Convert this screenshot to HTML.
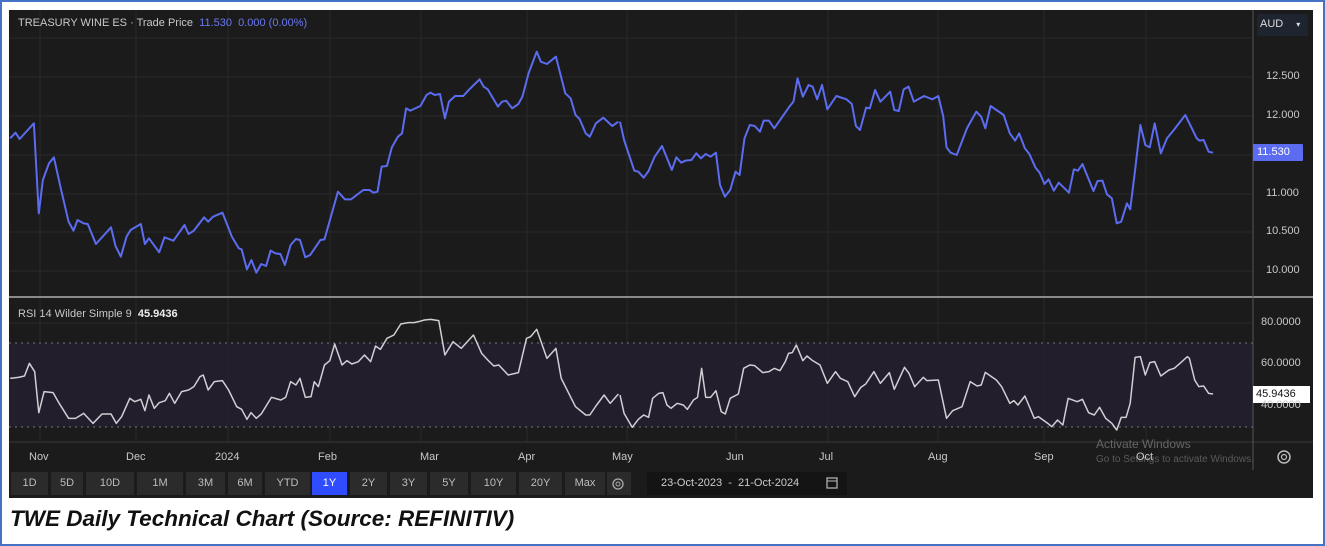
<!DOCTYPE html>
<html><head><meta charset="utf-8"><style>
*{margin:0;padding:0;box-sizing:border-box}
body{width:1325px;height:546px;background:#fff;position:relative;overflow:hidden;font-family:"Liberation Sans",sans-serif}
.frame{position:absolute;left:0;top:0;width:1325px;height:546px;border:2px solid #4472c4}
.chart{position:absolute;left:9px;top:10px;width:1304px;height:488px;background:#1b1b1b;overflow:hidden}
.t{position:absolute;font-size:11px;color:#c8c8c8;white-space:nowrap}
.btn{position:absolute;top:472px;height:23px;background:#2b2b2b;color:#bdbdbd;font-size:11px;line-height:23px;text-align:center}
.cap{position:absolute;left:10px;top:506px;font-size:22.5px;font-weight:bold;font-style:italic;color:#111;white-space:nowrap}
</style></head><body>
<div class="frame"></div>
<div class="chart"></div>
<svg style="position:absolute;left:0;top:0" width="1325" height="546">
<g stroke="#2a2a2a" stroke-width="1">
<line x1="9" y1="38" x2="1253" y2="38"/><line x1="9" y1="77" x2="1253" y2="77"/><line x1="9" y1="116" x2="1253" y2="116"/><line x1="9" y1="155" x2="1253" y2="155"/><line x1="9" y1="194" x2="1253" y2="194"/><line x1="9" y1="232" x2="1253" y2="232"/><line x1="9" y1="271" x2="1253" y2="271"/>
<line x1="9" y1="323" x2="1253" y2="323"/><line x1="9" y1="364" x2="1253" y2="364"/><line x1="9" y1="406" x2="1253" y2="406"/>
<line x1="40" y1="10" x2="40" y2="442"/><line x1="136" y1="10" x2="136" y2="442"/><line x1="228" y1="10" x2="228" y2="442"/><line x1="330" y1="10" x2="330" y2="442"/><line x1="421" y1="10" x2="421" y2="442"/><line x1="527" y1="10" x2="527" y2="442"/><line x1="627" y1="10" x2="627" y2="442"/><line x1="736" y1="10" x2="736" y2="442"/><line x1="828" y1="10" x2="828" y2="442"/><line x1="938" y1="10" x2="938" y2="442"/><line x1="1044" y1="10" x2="1044" y2="442"/><line x1="1146" y1="10" x2="1146" y2="442"/>
</g>
<rect x="9" y="343" width="1244" height="84" fill="#251f2e" opacity="0.9"/>
<line x1="9" y1="343" x2="1253" y2="343" stroke="#777" stroke-dasharray="2,4"/>
<line x1="9" y1="427" x2="1253" y2="427" stroke="#777" stroke-dasharray="2,4"/>
<line x1="9" y1="297" x2="1313" y2="297" stroke="#8a8a8a" stroke-width="2"/>
<line x1="9" y1="442" x2="1313" y2="442" stroke="#3a3a3a" stroke-width="1"/>
<line x1="1253" y1="10" x2="1253" y2="470" stroke="#555" stroke-width="1"/>
<g transform="translate(0,40) scale(0.40816,0.33333)" fill="none" stroke-linejoin="round">
<polyline vector-effect="non-scaling-stroke" stroke="#5b6cf0" stroke-width="2" points="25,295 38,278 48,297 83,250 95,520 105,420 120,370 132,352 148,440 168,545 180,572 190,540 205,550 215,552 235,612 272,562 283,618 296,650 310,590 320,570 345,552 355,612 365,595 390,637 403,592 425,602 452,555 462,582 475,572 500,532 510,545 522,530 545,518 568,590 585,625 592,628 605,688 616,660 628,698 640,672 652,678 663,632 675,640 687,642 698,675 712,615 725,597 735,600 748,652 760,645 785,600 795,598 828,455 845,478 860,478 890,450 905,450 915,458 925,455 935,380 948,378 960,322 975,290 985,280 995,205 1005,212 1030,198 1045,165 1055,158 1065,165 1078,162 1090,235 1100,185 1115,168 1135,168 1150,148 1175,118 1185,140 1195,148 1220,200 1230,185 1240,182 1255,205 1270,192 1280,170 1295,100 1315,35 1325,65 1340,72 1362,50 1385,160 1398,175 1410,225 1420,237 1435,280 1445,290 1460,250 1478,233 1500,258 1515,245"/>
<polyline vector-effect="non-scaling-stroke" stroke="#cfcfd4" stroke-width="1.5" points="25,1015 45,1012 60,1008 72,970 85,995 95,1118 108,1055 130,1058 145,1090 168,1135 185,1135 205,1120 228,1150 250,1122 272,1122 285,1150 298,1130 318,1075 330,1085 345,1078 355,1112 365,1065 378,1105 390,1088 405,1082 415,1060 428,1090 445,1055 462,1050 475,1040 490,1010 498,1005 510,1050 525,1025 545,1022 560,1050 580,1100 592,1108 605,1138 615,1118 628,1135 640,1122 665,1072 688,1080 700,1072 712,1025 725,1035 735,1015 748,1072 762,1070 770,1025 780,1040 795,975 808,962 820,912 838,975 850,962 862,972 878,965 893,945 908,965 920,918 932,928 948,895 965,885 982,852 1000,848 1015,848 1025,845 1040,840 1055,838 1075,842 1090,945 1110,905 1130,925 1160,885 1180,940 1195,960 1210,978 1222,975 1245,1005 1270,998 1290,895 1300,890 1315,868 1340,955 1362,925 1375,1015 1410,1100 1435,1125 1445,1125 1460,1098 1480,1065 1495,1090 1515,1062"/>
</g>
<g transform="translate(620,40) scale(0.40816,0.33333)" fill="none" stroke-linejoin="round">
<polyline vector-effect="non-scaling-stroke" stroke="#5b6cf0" stroke-width="2" points="0,245 10,300 35,392 45,395 58,413 70,393 85,350 103,318 127,390 138,352 150,368 160,362 175,360 187,340 198,355 210,342 222,350 235,338 245,435 257,470 270,450 283,395 293,405 305,295 318,255 330,258 343,275 352,242 365,242 378,265 415,200 425,185 435,115 448,170 462,135 472,140 483,178 495,135 508,208 530,168 555,178 568,192 578,258 588,270 603,203 612,205 625,150 638,185 662,155 672,210 683,213 695,148 707,140 720,185 745,168 765,178 780,168 792,230 800,322 810,338 825,345 850,265 873,215 885,230 895,265 908,198 940,225 955,280 968,302 978,280 992,325 1003,342 1018,383 1028,398 1040,432 1050,418 1063,452 1075,428 1100,458 1112,388 1122,392 1133,372 1160,453 1170,423 1182,422 1193,463 1205,475 1217,550 1228,545 1242,490 1250,508 1262,390 1275,255 1287,315 1298,322 1310,250 1325,340 1340,295 1360,265 1385,225 1413,295 1420,302 1430,300 1442,335 1453,338"/>
<polyline vector-effect="non-scaling-stroke" stroke="#cfcfd4" stroke-width="1.5" points="0,1065 10,1120 30,1162 45,1138 58,1125 70,1132 80,1075 95,1060 105,1058 115,1095 125,1105 140,1090 155,1095 165,1108 180,1080 190,1072 200,985 210,1072 222,1072 235,1052 248,1115 258,1122 270,1075 290,1062 303,985 318,975 330,977 350,998 365,995 378,985 392,992 405,965 413,940 422,938 432,915 448,962 458,948 472,962 490,975 508,1030 528,995 540,1015 558,1025 575,1070 590,1042 602,1032 622,995 638,1030 660,998 672,1048 697,982 708,1000 722,1040 743,1012 752,1022 780,1020 800,1135 815,1112 838,1100 858,1025 875,1038 885,1035 895,997 922,1020 935,1040 955,1090 965,1082 975,1095 992,1068 1015,1135 1025,1130 1048,1150 1058,1160 1072,1140 1085,1155 1098,1075 1120,1085 1133,1078 1148,1118 1162,1125 1175,1102 1190,1135 1205,1150 1217,1170 1228,1132 1240,1132 1250,1090 1262,952 1275,950 1287,1005 1298,968 1310,965 1325,1008 1345,990 1358,985 1372,970 1390,950 1395,955 1408,1020 1418,1040 1430,1038 1442,1060 1453,1062"/>
</g>
<rect x="1257" y="14" width="51" height="22" rx="2" fill="#1e2430"/>
<rect x="1253" y="144" width="50" height="17" rx="1" fill="#5b6cf0"/>
<rect x="1253" y="386" width="57" height="17" fill="#fff"/>
<circle cx="1284" cy="457" r="6" fill="none" stroke="#bbb" stroke-width="1.5"/>
<circle cx="1284" cy="457" r="2.5" fill="none" stroke="#bbb" stroke-width="1.2"/>
</svg>
<div class="t" style="left:18px;top:17px">TREASURY WINE ES · Trade Price <span style="color:#6a78f0">&nbsp;11.530 &nbsp;0.000 (0.00%)</span></div>
<div class="t" style="left:1260px;top:18px;color:#ddd">AUD <span style="margin-left:10px;font-size:8px">▾</span></div>
<div class="t" style="left:1266px;top:70px">12.500</div>
<div class="t" style="left:1266px;top:109px">12.000</div>
<div class="t" style="left:1257px;top:146px;color:#fff">11.530</div>
<div class="t" style="left:1266px;top:187px">11.000</div>
<div class="t" style="left:1266px;top:225px">10.500</div>
<div class="t" style="left:1266px;top:264px">10.000</div>
<div class="t" style="left:18px;top:308px">RSI 14 Wilder Simple 9 &nbsp;<b style="color:#eee">45.9436</b></div>
<div class="t" style="left:1261px;top:316px">80.0000</div>
<div class="t" style="left:1261px;top:357px">60.0000</div>
<div class="t" style="left:1261px;top:399px">40.0000</div>
<div class="t" style="left:1256px;top:388px;color:#111">45.9436</div>
<div class="t" style="left:1096px;top:437px;color:#666;font-size:12px">Activate Windows</div>
<div class="t" style="left:1096px;top:454px;color:#5a5a5a;font-size:10px">Go to Settings to activate Windows.</div>
<div class="t" style="left:29px;top:451px">Nov</div>
<div class="t" style="left:126px;top:451px">Dec</div>
<div class="t" style="left:215px;top:451px">2024</div>
<div class="t" style="left:318px;top:451px">Feb</div>
<div class="t" style="left:420px;top:451px">Mar</div>
<div class="t" style="left:518px;top:451px">Apr</div>
<div class="t" style="left:612px;top:451px">May</div>
<div class="t" style="left:726px;top:451px">Jun</div>
<div class="t" style="left:819px;top:451px">Jul</div>
<div class="t" style="left:928px;top:451px">Aug</div>
<div class="t" style="left:1034px;top:451px">Sep</div>
<div class="t" style="left:1136px;top:451px">Oct</div>
<div class="btn" style="left:11px;width:37px">1D</div>
<div class="btn" style="left:51px;width:32px">5D</div>
<div class="btn" style="left:86px;width:48px">10D</div>
<div class="btn" style="left:137px;width:46px">1M</div>
<div class="btn" style="left:186px;width:39px">3M</div>
<div class="btn" style="left:228px;width:34px">6M</div>
<div class="btn" style="left:265px;width:45px">YTD</div>
<div class="btn" style="left:312px;width:35px;background:#2f4dff;color:#fff">1Y</div>
<div class="btn" style="left:350px;width:37px">2Y</div>
<div class="btn" style="left:390px;width:37px">3Y</div>
<div class="btn" style="left:430px;width:38px">5Y</div>
<div class="btn" style="left:471px;width:45px">10Y</div>
<div class="btn" style="left:519px;width:43px">20Y</div>
<div class="btn" style="left:565px;width:40px">Max</div>
<div class="btn" style="left:607px;width:24px;background:#2b2b2b"></div>
<div class="btn" style="left:647px;width:200px;background:#141414;text-align:left;padding-left:14px;color:#ccc">23-Oct-2023 &nbsp;-&nbsp; 21-Oct-2024</div>
<svg style="position:absolute;left:0;top:0" width="1325" height="546">
<circle cx="618" cy="484" r="5" fill="none" stroke="#aaa" stroke-width="1.3"/>
<circle cx="618" cy="484" r="2" fill="none" stroke="#aaa" stroke-width="1"/>
<rect x="827" y="478" width="10" height="10" fill="none" stroke="#bbb" stroke-width="1.2"/>
<line x1="827" y1="481" x2="837" y2="481" stroke="#bbb"/>
</svg>
<div class="cap">TWE Daily Technical Chart (Source: REFINITIV)</div>
</body></html>
